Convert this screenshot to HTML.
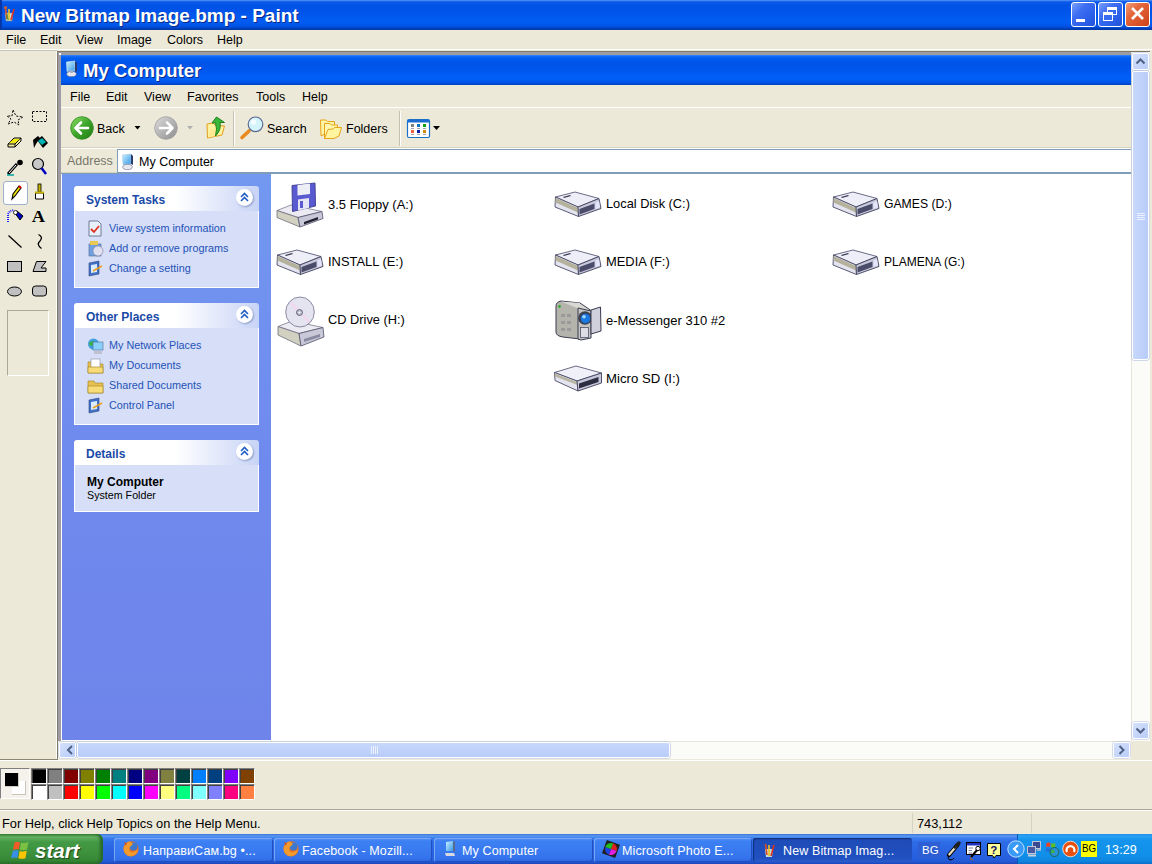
<!DOCTYPE html>
<html><head><meta charset="utf-8">
<style>
*{margin:0;padding:0;box-sizing:border-box}
html,body{width:1152px;height:864px;overflow:hidden;background:#ECE9D8;font-family:"Liberation Sans",sans-serif;position:relative}
.a{position:absolute}
.t{position:absolute;white-space:nowrap;line-height:1}
#ptitle{left:0;top:0;width:1152px;height:30px;background:linear-gradient(#5a9ef8 0px,#2a6ff0 1px,#0a58e8 2px,#0052e6 6px,#0054ea 12px,#005af0 18px,#005cf2 22px,#0054e6 26px,#0046cc 28px,#003aa8 29px,#003aa8 30px)}
.wb{position:absolute;top:2px;width:25px;height:25px;border:1px solid #fff;border-radius:3px}
.pc{position:absolute;width:16px;height:16px;border-top:1px solid #808080;border-left:1px solid #808080;border-right:1px solid #fff;border-bottom:1px solid #fff}
.pc i{display:block;width:14px;height:14px;border-top:1px solid #404040;border-left:1px solid #404040}
.tb{position:absolute;top:838px;height:24px;border-radius:3px;background:linear-gradient(#5d92f0 0,#3c81f3 3px,#3a7af0 12px,#3473ec 20px,#2f66de 24px);box-shadow:inset 1px 1px 0 #7aa6f6,inset -1px -1px 0 #1f4fc0}
.tbt{position:absolute;top:845px;font-size:12.5px;letter-spacing:0.12px;color:#fff;white-space:nowrap;line-height:1}
.ph{position:absolute;left:74px;width:185px;height:25px;border-radius:3px 3px 0 0;background:linear-gradient(90deg,#fff 0,#fff 55%,#c8d4f6 100%)}
.pb{position:absolute;left:74px;width:185px;background:#d6dff7;border:1px solid #fff;border-top:none}
.ph b{position:absolute;left:12px;top:8px;font-size:12px;color:#1a4aa8;line-height:1}
.lk{position:absolute;left:109px;font-size:10.8px;color:#1f52b8;white-space:nowrap;line-height:1}
.chev{position:absolute;left:236px;width:17px;height:17px;border-radius:50%;background:#fff;box-shadow:1px 1px 2px #8c9cc8}
.di{position:absolute;font-size:13px;color:#000;white-space:nowrap;line-height:1}
</style></head>
<body>
<!-- ============ Paint title bar ============ -->
<div id="ptitle" class="a"></div>
<div class="a" style="left:0;top:0;width:2px;height:30px;background:#0738a8"></div>
<div class="t" style="left:21px;top:6px;font-size:19px;font-weight:bold;color:#fff;text-shadow:1px 1px 0 #0a2a8a">New Bitmap Image.bmp - Paint</div>
<div class="wb" style="left:1071px;background:linear-gradient(135deg,#7aa0fa 0,#3d6ef2 35%,#2a5fe8 70%,#2253d8 100%)"></div>
<div class="wb" style="left:1098px;background:linear-gradient(135deg,#7aa0fa 0,#3d6ef2 35%,#2a5fe8 70%,#2253d8 100%)"></div>
<div class="wb" style="left:1125px;background:linear-gradient(135deg,#f2a07a 0,#e4673a 35%,#d9532a 70%,#c84418 100%)"></div>
<div class="a" style="left:1076px;top:19px;width:9px;height:3px;background:#fff"></div>
<div class="a" style="left:1107px;top:7px;width:10px;height:8px;border:1px solid #fff;border-top-width:3px"></div>
<div class="a" style="left:1103px;top:12px;width:10px;height:9px;border:1px solid #fff;border-top-width:3px;background:#3a6cf0"></div>
<svg class="a" style="left:1125px;top:2px" width="25" height="25"><path d="M7 6 L18 17 M18 6 L7 17" stroke="#fff" stroke-width="2.6"/></svg>

<!-- ============ Paint menu ============ -->
<div class="t" style="left:6px;top:34px;font-size:12.5px">File</div>
<div class="t" style="left:40px;top:34px;font-size:12.5px">Edit</div>
<div class="t" style="left:76px;top:34px;font-size:12.5px">View</div>
<div class="t" style="left:117px;top:34px;font-size:12.5px">Image</div>
<div class="t" style="left:167px;top:34px;font-size:12.5px">Colors</div>
<div class="t" style="left:217px;top:34px;font-size:12.5px">Help</div>
<div class="a" style="left:0;top:49px;width:1152px;height:1px;background:#fff"></div>

<!-- ============ toolbox ============ -->
<div class="a" style="left:56px;top:50px;width:1px;height:710px;background:#fff"></div>
<div class="a" style="left:3px;top:181px;width:25px;height:24px;border:1px solid #9db0cc;border-radius:3px;background:#fff"></div>
<div class="a" style="left:7px;top:310px;width:42px;height:66px;border-top:1px solid #aca899;border-left:1px solid #aca899;border-right:1px solid #fff;border-bottom:1px solid #fff"></div>
<svg class="a" style="left:0;top:100px" width="57" height="200" viewBox="0 100 57 200">
 <!-- free select star -->
 <path d="M13 110 L16 116 L23 117 L18 120 L19 125 L14 122 L8 124 L11 119 L7 116 L12 116 Z" fill="none" stroke="#000" stroke-width="1" stroke-dasharray="2 1.5"/>
 <!-- rect select -->
 <rect x="32.5" y="111.5" width="14" height="10" fill="none" stroke="#000" stroke-dasharray="2 1.5"/>
 <!-- eraser -->
 <path d="M8 144 L14 138 L21 138 L21 141 L15 147 L8 147 Z" fill="#f5f0a0" stroke="#000"/>
 <path d="M8 144 L15 144 L21 138 M15 144 L15 147" fill="none" stroke="#000"/>
 <path d="M9 143 L14 139 L20 139 L15 143Z" fill="#f0e800"/>
 <!-- fill bucket -->
 <path d="M33 140 L38 136 L40 138 L36 144 L34 148 Z" fill="#000"/>
 <path d="M37 140 L42 136 L48 143 L43 148 Z" fill="#000"/>
 <path d="M38 141 L42 138 L46 142 L42 145 Z" fill="#00b4b4"/>
 <!-- picker -->
 <path d="M8 174 L17 164" stroke="#000" stroke-width="3"/>
 <path d="M9 173 L16 165" stroke="#fff" stroke-width="1"/>
 <circle cx="20" cy="162.5" r="2.8" fill="#000"/>
 <path d="M7 175 L14 175" stroke="#00a0a0" stroke-width="1.5"/>
 <!-- magnifier -->
 <circle cx="38" cy="164" r="5.5" fill="#c8c8c8" stroke="#000" stroke-width="1.2"/>
 <path d="M41.5 168 L46 174" stroke="#0000c0" stroke-width="2.5"/>
 <!-- pencil -->
 <path d="M12 199 L13 194 L19 186 L21 188 L15 196 Z" fill="#f0e000" stroke="#000" stroke-width="1.1"/>
 <path d="M19 186 L21 188" stroke="#e00000" stroke-width="2"/>
 <!-- brush -->
 <rect x="38" y="184" width="3" height="8" fill="#c8b400" stroke="#000" stroke-width="0.8"/>
 <path d="M35.5 193 L43.5 193 L43.5 199 L35.5 199Z" fill="#fff" stroke="#000"/>
 <path d="M35 192.5 L44 192.5" stroke="#c8b400" stroke-width="2"/>
 <!-- airbrush -->
 <path d="M8 222 L8 214 L10 211 L14 210" stroke="#2020ff" stroke-width="2" stroke-dasharray="1 1" fill="none"/>
 <path d="M14 212 L17 211 L23 216 L20 220 Z" fill="#0000c0" stroke="#000"/>
 <circle cx="15.5" cy="212.5" r="2" fill="#fff" stroke="#000" stroke-width="0.8"/>
 <!-- text A -->
 <text x="31.5" y="222" font-family="Liberation Serif" font-weight="bold" font-size="16" fill="#000" transform="translate(-4.5 0) scale(1.15 1)">A</text>
 <!-- line -->
 <path d="M8.5 235.5 L21.5 247.5" stroke="#000" stroke-width="1.3"/>
 <!-- curve -->
 <path d="M38.5 234.5 Q43.5 237 40 241 Q36 244.5 41.5 248.5" fill="none" stroke="#000" stroke-width="1.3"/>
 <!-- rect -->
 <rect x="7.5" y="261.5" width="14" height="10" fill="#c0c0c0" stroke="#000"/>
 <!-- polygon -->
 <path d="M36.5 261.5 L46 261.5 L41 268 L46 268 L46 271.5 L33 271.5 Z" fill="#c0c0c0" stroke="#000"/>
 <!-- ellipse -->
 <ellipse cx="14.5" cy="291.5" rx="7" ry="4.5" fill="#c0c0c0" stroke="#000"/>
 <!-- round rect -->
 <rect x="32.5" y="286" width="14" height="10" rx="3" fill="#c0c0c0" stroke="#000"/>
</svg>

<!-- ============ canvas frame ============ -->
<div class="a" style="left:0;top:50px;width:57px;height:1px;background:#c8c4b4"></div>
<div class="a" style="left:0;top:759px;width:58px;height:1px;background:#8a8672"></div>
<div class="a" style="left:0;top:760px;width:1152px;height:1px;background:#fff"></div>
<div class="a" style="left:57px;top:51px;width:1093px;height:708px;background:#7e7a68"></div>
<div class="a" style="left:58px;top:52px;width:1092px;height:707px;background:#a09ca4"></div>
<div class="a" style="left:58px;top:758px;width:1092px;height:1px;background:#d8d4c0"></div>
<div class="a" style="left:59px;top:53px;width:2px;height:2px;background:#fff"></div>
<div class="a" style="left:61px;top:55px;width:1070px;height:686px;background:#fff"></div>
<!-- explorer title -->
<div class="a" style="left:61px;top:55px;width:1070px;height:30px;background:linear-gradient(#3d8cf8 0,#1a6ef4 1px,#005ef2 3px,#0054e8 8px,#0056ec 14px,#005cf4 20px,#0060f8 24px,#0052e4 28px,#003fbe 30px,#0036a8 31px)"></div>
<div class="t" style="left:83px;top:62px;font-size:18.5px;font-weight:bold;color:#fff;text-shadow:1px 1px 0 #0a2a8a">My Computer</div>
<!-- explorer menu -->
<div class="a" style="left:61px;top:85px;width:1070px;height:23px;background:#ece9d8"></div>
<div class="a" style="left:61px;top:107px;width:1070px;height:1px;background:#fff"></div>
<div class="t" style="left:70px;top:91px;font-size:12.5px">File</div>
<div class="t" style="left:106px;top:91px;font-size:12.5px">Edit</div>
<div class="t" style="left:144px;top:91px;font-size:12.5px">View</div>
<div class="t" style="left:187px;top:91px;font-size:12.5px">Favorites</div>
<div class="t" style="left:256px;top:91px;font-size:12.5px">Tools</div>
<div class="t" style="left:302px;top:91px;font-size:12.5px">Help</div>
<!-- toolbar -->
<div class="a" style="left:61px;top:108px;width:1070px;height:40px;background:#ece9d8"></div>
<div class="a" style="left:61px;top:147px;width:1070px;height:1px;background:#d6d2bc"></div>
<div class="a" style="left:61px;top:148px;width:1070px;height:1px;background:#fff"></div>
<div class="a" style="left:233px;top:111px;width:1px;height:35px;background:#c5c2b2"></div>
<div class="a" style="left:234px;top:111px;width:1px;height:35px;background:#fff"></div>
<div class="a" style="left:399px;top:111px;width:1px;height:35px;background:#c5c2b2"></div>
<div class="a" style="left:400px;top:111px;width:1px;height:35px;background:#fff"></div>
<div class="t" style="left:97px;top:123px;font-size:12.5px">Back</div>
<div class="t" style="left:267px;top:123px;font-size:12.5px">Search</div>
<div class="t" style="left:346px;top:123px;font-size:12.5px">Folders</div>
<!-- address -->
<div class="a" style="left:61px;top:149px;width:1070px;height:25px;background:#ece9d8"></div>
<div class="a" style="left:61px;top:172px;width:1070px;height:1px;background:#d6d2bc"></div>
<div class="t" style="left:67px;top:155px;font-size:12.5px;color:#7a786c">Address</div>
<div class="a" style="left:117px;top:149px;width:1014px;height:24px;background:#fff;border:1px solid #7f9db9;border-right:none"></div>
<div class="t" style="left:139px;top:156px;font-size:12.5px">My Computer</div>
<!-- left pane -->
<div class="a" style="left:62px;top:174px;width:209px;height:566px;background:linear-gradient(#7298f0,#6f8aee 50%,#6e84ea)"></div>
<div class="a" style="left:61px;top:173px;width:1070px;height:1px;background:#7f9db9"></div>

<div class="ph" style="top:186px"><b>System Tasks</b></div>
<div class="pb" style="top:211px;height:77px"></div>
<div class="chev" style="top:189px"></div>
<div class="lk" style="top:223px">View system information</div>
<div class="lk" style="top:243px">Add or remove programs</div>
<div class="lk" style="top:263px">Change a setting</div>

<div class="ph" style="top:303px"><b>Other Places</b></div>
<div class="pb" style="top:328px;height:97px"></div>
<div class="chev" style="top:306px"></div>
<div class="lk" style="top:340px">My Network Places</div>
<div class="lk" style="top:360px">My Documents</div>
<div class="lk" style="top:380px">Shared Documents</div>
<div class="lk" style="top:400px">Control Panel</div>

<div class="ph" style="top:440px"><b>Details</b></div>
<div class="pb" style="top:465px;height:47px"></div>
<div class="chev" style="top:443px"></div>
<div class="t" style="left:87px;top:476px;font-size:12px;font-weight:bold">My Computer</div>
<div class="t" style="left:87px;top:490px;font-size:10.7px">System Folder</div>

<!-- drive labels -->
<div class="di" style="left:328px;top:198px">3.5 Floppy (A:)</div>
<div class="di" style="left:606px;top:198px;font-size:12.8px">Local Disk (C:)</div>
<div class="di" style="left:884px;top:198px;font-size:12.2px">GAMES (D:)</div>
<div class="di" style="left:328px;top:256px;font-size:12.9px">INSTALL (E:)</div>
<div class="di" style="left:606px;top:256px;font-size:12.9px">MEDIA (F:)</div>
<div class="di" style="left:884px;top:256px;font-size:12.0px">PLAMENA (G:)</div>
<div class="di" style="left:328px;top:314px;font-size:12.8px">CD Drive (H:)</div>
<div class="di" style="left:606px;top:314px">e-Messenger 310 #2</div>
<div class="di" style="left:606px;top:372px;font-size:13.2px">Micro SD (I:)</div>

<!-- paint scrollbars -->
<div class="a" style="left:1131px;top:52px;width:19px;height:689px;background:#fbfbf8;border-left:1px solid #e8e6da"></div>
<div class="a" style="left:1132px;top:53px;width:17px;height:17px;border:1px solid #fff;border-radius:2px;background:linear-gradient(135deg,#d4e0fc,#b9cdf8);box-shadow:0 0 0 0.5px #b0c0e0"></div>
<div class="a" style="left:1132px;top:71px;width:17px;height:289px;border:1px solid #fff;border-radius:2px;background:linear-gradient(90deg,#c8d8fb,#b8ccfa);box-shadow:0 0 0 0.5px #a8b8d8"></div>
<div class="a" style="left:1132px;top:722px;width:17px;height:17px;border:1px solid #fff;border-radius:2px;background:linear-gradient(135deg,#d4e0fc,#b9cdf8);box-shadow:0 0 0 0.5px #b0c0e0"></div>
<div class="a" style="left:58px;top:741px;width:1073px;height:18px;background:#fbfbf8;border-top:1px solid #e8e6da"></div>
<div class="a" style="left:59px;top:742px;width:17px;height:16px;border:1px solid #fff;border-radius:2px;background:linear-gradient(135deg,#d4e0fc,#b9cdf8);box-shadow:0 0 0 0.5px #b0c0e0"></div>
<div class="a" style="left:77px;top:742px;width:593px;height:16px;border:1px solid #fff;border-radius:2px;background:linear-gradient(#c8d8fb,#b8ccfa);box-shadow:0 0 0 0.5px #a8b8d8"></div>
<div class="a" style="left:1113px;top:742px;width:17px;height:16px;border:1px solid #fff;border-radius:2px;background:linear-gradient(135deg,#d4e0fc,#b9cdf8);box-shadow:0 0 0 0.5px #b0c0e0"></div>
<div class="a" style="left:1131px;top:741px;width:19px;height:19px;background:#ece9d8"></div>
<div class="a" style="left:1150px;top:50px;width:2px;height:710px;background:#ece9d8"></div>



<!-- ============ icon overlay ============ -->
<svg class="a" style="left:0;top:0" width="1152" height="864">
<defs>
 <linearGradient id="gGreen" x1="0" y1="0" x2="1" y2="1"><stop offset="0" stop-color="#8ee06a"/><stop offset="0.5" stop-color="#3ea52a"/><stop offset="1" stop-color="#1f7a14"/></linearGradient>
 <linearGradient id="gGray" x1="0" y1="0" x2="1" y2="1"><stop offset="0" stop-color="#dcdcdc"/><stop offset="0.5" stop-color="#b4b4b4"/><stop offset="1" stop-color="#8c8c8c"/></linearGradient>
 <linearGradient id="gFold" x1="0" y1="0" x2="0" y2="1"><stop offset="0" stop-color="#fff4b8"/><stop offset="1" stop-color="#e8c050"/></linearGradient>
 <linearGradient id="gMon" x1="0" y1="0" x2="1" y2="1"><stop offset="0" stop-color="#c8f0ff"/><stop offset="1" stop-color="#3a9ae8"/></linearGradient>
 <g id="hdd">
  <path d="M1.5 5 L21 0 L45 6.5 L24 15 Z" fill="#eeeef8" stroke="#5a5a78" stroke-width="0.9"/>
  <path d="M9 5 L16 3 L17 4 L10 6 Z" fill="#3a3a50"/>
  <path d="M1.5 5 L24 15 L24.5 24.5 L1 15 Z" fill="#e4e4f0" stroke="#4a4a68" stroke-width="0.9"/>
  <path d="M1.7 6 L24 16 L24 20.5 L1.5 10.5 Z" fill="#b4b29c"/>
  <path d="M24 15 L45 6.5 L47 16.5 L24.5 24.5 Z" fill="#c8c8dc" stroke="#40405a" stroke-width="0.9"/>
  <path d="M25.5 17 L40.5 11.5 L40.5 17 L25.5 22.5 Z" fill="#4a4c6a"/>
  <path d="M41.5 10.5 L45 9 L46 15.5 L41.5 17 Z" fill="#e4e4fa"/>
 </g>
 <g id="chev">
  <path d="M-3.5 -0.5 L0 -4 L3.5 -0.5 M-3.5 3.5 L0 0 L3.5 3.5" fill="none" stroke="#215dc6" stroke-width="1.6"/>
 </g>
</defs>

<!-- paint title icon -->
<g transform="translate(4,6)">
 <path d="M1 7 L9 7 L8 15 L2 15 Z" fill="#c8dcd8" stroke="#708080" stroke-width="0.6"/>
 <path d="M3 13 L1.5 2" stroke="#e05020" stroke-width="1.6"/>
 <circle cx="1.5" cy="1.5" r="1.6" fill="#d06030"/>
 <path d="M5 14 L5 3" stroke="#f0c020" stroke-width="1.6"/>
 <path d="M7 14 L10 3" stroke="#e03020" stroke-width="1.6"/>
 <path d="M4 14 L3 8" stroke="#40a040" stroke-width="1.2"/>
</g>
<!-- explorer title icon -->
<path d="M66.5 62 L75 61 L75 71 L67 71.5 Z" fill="url(#gMon)" stroke="#d8e8f0" stroke-width="0.6"/>
<path d="M75 61 L77 63 L77 72 L75 71 Z" fill="#2a3a6a"/>
<ellipse cx="71.5" cy="74" rx="4.8" ry="2.6" fill="#e8e8f0" stroke="#6a6a8a" stroke-width="0.6"/>
<rect x="70" y="71" width="3" height="2" fill="#b0b0c0"/>
<!-- back / forward -->
<circle cx="82" cy="128" r="11.3" fill="url(#gGreen)" stroke="#2a8a1c" stroke-width="0.8"/>
<path d="M88 128 L76 128 M81 122.5 L75.5 128 L81 133.5" fill="none" stroke="#fff" stroke-width="2.6" stroke-linecap="round" stroke-linejoin="round"/>
<path d="M134.5 126 L140.5 126 L137.5 129.5 Z" fill="#000"/>
<circle cx="166" cy="128" r="11.3" fill="url(#gGray)" stroke="#a0a0a0" stroke-width="0.8"/>
<path d="M160 128 L172 128 M167 122.5 L172.5 128 L167 133.5" fill="none" stroke="#fff" stroke-width="2.6" stroke-linecap="round" stroke-linejoin="round"/>
<path d="M187 126 L193 126 L190 129.5 Z" fill="#b0b0b0"/>
<!-- up -->
<path d="M207 124 L213 123 L215.5 125.5 L224.5 126 L222 135 L207.5 138 Z" fill="#fff2a0" stroke="#e0a020" stroke-width="1"/>
<path d="M208 137.5 L210.5 130 L219 128 L216 136 Z" fill="#ffe890" opacity="0.9"/>
<path d="M212 123 L216.5 117 L224.5 122.5 L220 122.5 Q221.5 130 215.5 136 Q217.5 129 215.5 122.8 Z" fill="#3ab83a" stroke="#0e780e" stroke-width="0.9" stroke-linejoin="round"/>
<!-- search -->
<path d="M249 131 L242 137.5" stroke="#e88a20" stroke-width="3.6" stroke-linecap="round"/>
<circle cx="255.5" cy="124.3" r="7.3" fill="#d4f4fc" stroke="#5a6a90" stroke-width="1.2"/>
<circle cx="253.5" cy="122" r="2.8" fill="#fff" opacity="0.7"/>
<!-- folders -->
<path d="M320.5 120 L326 120 L327.5 121.5 L334.5 121.5 L334.5 128 L321 136 Z" fill="#fff4a8" stroke="#e8a418" stroke-width="1"/>
<path d="M324.5 123.5 L330 123.5 L331.5 125 L337.5 125 L337.5 128 L324.5 138.5 Z" fill="#fff6b0" stroke="#e8a418" stroke-width="1"/>
<path d="M324.5 138.5 L328 129.5 L333 129 L334.5 127.5 L341.5 127.5 L339 136 L334 138.5 Z" fill="#fff4a0" stroke="#e8a418" stroke-width="1"/>
<!-- views -->
<rect x="407.5" y="119.5" width="22" height="18" rx="1.5" fill="#fff" stroke="#1a70c8" stroke-width="1.2"/>
<rect x="408" y="120" width="21" height="2.5" fill="#1a6ad0"/>
<rect x="411" y="124" width="3" height="3" fill="#808080"/><rect x="417" y="124" width="3" height="3" fill="#0a70c0"/><rect x="423" y="124" width="3" height="3" fill="#10a010"/>
<rect x="411" y="130" width="3" height="3" fill="#f06040"/><rect x="417" y="130" width="3" height="3" fill="#1020a0"/><rect x="423" y="130" width="3" height="3" fill="#d08a10"/>
<path d="M411 128.5 H414 M417 128.5 H420 M423 128.5 H426 M411 134.5 H414 M417 134.5 H420 M423 134.5 H426" stroke="#a0a0b0" stroke-width="1"/>
<path d="M433 126 L440 126 L436.5 130 Z" fill="#000"/>
<!-- address icon -->
<path d="M122.5 155 L131 154 L131 164 L123 164.5 Z" fill="url(#gMon)" stroke="#a8c8e0" stroke-width="0.6"/>
<path d="M131 154 L133 156 L133 165 L131 164 Z" fill="#2a3a6a"/>
<ellipse cx="127.5" cy="167" rx="4.8" ry="2.6" fill="#e8e8f0" stroke="#6a6a8a" stroke-width="0.6"/>
<!-- chevrons -->
<use href="#chev" x="244.5" y="197.5"/>
<use href="#chev" x="244.5" y="314.5"/>
<use href="#chev" x="244.5" y="451.5"/>

<!-- task link icons -->
<g transform="translate(88,221)">
 <path d="M1 0 L10 0 L13 3 L13 15 L1 15 Z" fill="#e8f0fc" stroke="#50607a" stroke-width="0.8"/>
 <path d="M3 8 L6 11 L11 5" fill="none" stroke="#e03020" stroke-width="1.8"/>
</g>
<g transform="translate(88,241)">
 <rect x="1" y="3" width="12" height="12" fill="#70a0e0" stroke="#506890" stroke-width="0.6"/>
 <circle cx="10" cy="10" r="5" fill="#e0e0f0" stroke="#8080a0" stroke-width="0.6"/>
 <rect x="2" y="0" width="8" height="4" fill="#e8c850"/>
</g>
<g transform="translate(88,261)">
 <path d="M1 2 L11 0 L11 13 L1 15 Z" fill="#4070c8" stroke="#304880" stroke-width="0.6"/>
 <path d="M3 4 L9 3 L9 11 L3 12 Z" fill="#d8ecfc"/>
 <path d="M5 10 L14 5" stroke="#f0a020" stroke-width="1.5"/>
</g>
<g transform="translate(88,338)">
 <circle cx="5.5" cy="6" r="5.5" fill="#40a0e0"/>
 <path d="M1 5 Q4 2 7 4 Q5 8 2 8Z" fill="#40b040"/>
 <rect x="5" y="4" width="10" height="8" fill="#8ad0f8" stroke="#4a6a9a" stroke-width="0.6"/>
 <rect x="6" y="13" width="8" height="3" fill="#c0c0d0"/>
</g>
<g transform="translate(88,358)">
 <path d="M0 4 L6 4 L7 6 L15 6 L15 15 L0 15 Z" fill="#e8c050" stroke="#a08020" stroke-width="0.6"/>
 <rect x="3" y="1" width="9" height="9" fill="#fff" stroke="#8090a0" stroke-width="0.6"/>
 <path d="M0 9 L15 9 L15 15 L0 15 Z" fill="#f8dc78" stroke="#a08020" stroke-width="0.6"/>
</g>
<g transform="translate(88,379)">
 <path d="M0 2 L6 2 L7 4 L15 4 L15 14 L0 14 Z" fill="#e8c050" stroke="#a08020" stroke-width="0.6"/>
 <path d="M0 7 L15 7 L15 14 L0 14 Z" fill="#f8dc78" stroke="#a08020" stroke-width="0.6"/>
</g>
<g transform="translate(88,398)">
 <path d="M1 2 L11 0 L11 13 L1 15 Z" fill="#4070c8" stroke="#304880" stroke-width="0.6"/>
 <path d="M3 4 L9 3 L9 11 L3 12 Z" fill="#d8ecfc"/>
 <path d="M5 10 L14 5" stroke="#f0a020" stroke-width="1.5"/>
</g>

<!-- drive icons -->
<use href="#hdd" x="554" y="192"/>
<use href="#hdd" x="832" y="192"/>
<use href="#hdd" x="276" y="250"/>
<use href="#hdd" x="554" y="250"/>
<use href="#hdd" x="832" y="250"/>
<!-- floppy -->
<g transform="translate(276,204)">
 <path d="M1 6.5 L15 1 L46 7.5 L22 13.5 Z" fill="#ecebf4" stroke="#7c7c90" stroke-width="0.8"/>
 <path d="M1 6.5 L22 13.5 L24 23 L1 13.5 Z" fill="#d2d0c0" stroke="#6c6c7c" stroke-width="0.8"/>
 <path d="M22 13.5 L46 7.5 L47 14.5 L24 23 Z" fill="#c8c8d8" stroke="#50506a" stroke-width="0.8"/>
 <path d="M28 18 L42 13 L42 15.5 L28 20.5 Z" fill="#202030"/>
</g>
<g>
 <path d="M292 185.5 L315 183 L315.5 206 L292.5 211.5 Z" fill="#5a5ad0" stroke="#3a3a90" stroke-width="0.9"/>
 <path d="M297.5 185 L310 183.6 L310 194 L297.5 195.5 Z" fill="#eeeef6"/>
 <path d="M298 199.5 L309 198 L309 208 L298 210.5 Z" fill="#e4e4f4"/>
 <rect x="300" y="201" width="3" height="7" fill="#5a5ad0"/>
</g>
<!-- cd drive -->
<g transform="translate(277,320)">
 <path d="M1 6.5 L15 1 L46 7.5 L22 13.5 Z" fill="#ecebf4" stroke="#7c7c90" stroke-width="0.8"/>
 <path d="M1 6.5 L22 13.5 L24 26 L1 15 Z" fill="#d2d0c0" stroke="#6c6c7c" stroke-width="0.8"/>
 <path d="M22 13.5 L46 7.5 L47 17 L24 26 Z" fill="#c8c8d8" stroke="#50506a" stroke-width="0.8"/>
 <path d="M27 19 L43 14 L43 17 L27 22 Z" fill="#8a8aa0"/>
</g>
<ellipse cx="300" cy="312" rx="14.3" ry="15" fill="#e4e4f0" stroke="#70708a" stroke-width="0.8"/>
<path d="M291 303 L297 310 M303 315 L309 322" stroke="#f0d8f0" stroke-width="3"/>
<circle cx="299.5" cy="312.5" r="3" fill="#b8b8c8" stroke="#50506a" stroke-width="0.8"/>
<circle cx="299.5" cy="312.5" r="1.1" fill="#fff"/>
<!-- camera -->
<path d="M556 306 Q556 302 561 301 L580 303 L580 339 L563 337 Q556 336 556 332 Z" fill="#b4b4ac" stroke="#3a3a50" stroke-width="1"/>
<path d="M561 301.5 L580 303 L591 310.5 L578 308.5 Z" fill="#d8d8d4"/>
<path d="M578 308 L591 311 L591 338 L581 340 L578 339 Z" fill="#c4c4c0" stroke="#3a3a50" stroke-width="1"/>
<path d="M580 303 L591 310.5" stroke="#3a3a50" stroke-width="1"/>
<rect x="561" y="314" width="4" height="3" fill="#9a9a9a"/><rect x="567" y="314" width="4" height="3" fill="#9a9a9a"/>
<rect x="561" y="321" width="4" height="3" fill="#9a9a9a"/><rect x="567" y="321" width="4" height="3" fill="#9a9a9a"/>
<rect x="561" y="328" width="4" height="3" fill="#9a9a9a"/><rect x="567" y="328" width="4" height="3" fill="#9a9a9a"/>
<circle cx="559.5" cy="306.5" r="1.4" fill="#30b030"/>
<circle cx="585" cy="318" r="6.8" fill="#3a4050"/>
<circle cx="585.5" cy="318.5" r="4.8" fill="#1a78e0"/>
<circle cx="584" cy="316.8" r="1.8" fill="#a0d8ff"/>
<rect x="580.5" y="327.5" width="8" height="10" fill="#dcdce4" stroke="#50506a" stroke-width="0.8"/>
<path d="M591 310 L600.5 307 L601 331 L591 334 Z" fill="#d0d0dc" stroke="#3a3a50" stroke-width="1"/>
<!-- micro sd -->
<g transform="translate(554,366)">
 <path d="M0.5 6.5 L22 0 L47.5 7 L23 15 Z" fill="#f0f0f8" stroke="#5a5a78" stroke-width="0.9"/>
 <path d="M0.5 6.5 L23 15 L24 25 L1 14.5 Z" fill="#e4e4f0" stroke="#4a4a68" stroke-width="0.9"/>
 <path d="M0.8 7.5 L23 16 L23.5 19 L1 10.5 Z" fill="#b8b6a0"/>
 <path d="M23 15 L47.5 7 L47.5 17 L24 25 Z" fill="#c8c8dc" stroke="#40405a" stroke-width="0.9"/>
 <path d="M25 17.5 L44.5 11 L44.5 16 L25 22.5 Z" fill="#2e2e40"/>
</g>

<!-- scrollbar arrows -->
<path d="M1136.5 63.5 L1140.5 59.5 L1144.5 63.5" fill="none" stroke="#4d6185" stroke-width="2"/>
<path d="M1136.5 728.5 L1140.5 732.5 L1144.5 728.5" fill="none" stroke="#4d6185" stroke-width="2"/>
<path d="M72 746 L68 750 L72 754" fill="none" stroke="#4d6185" stroke-width="2"/>
<path d="M1119.5 746 L1123.5 750 L1119.5 754" fill="none" stroke="#4d6185" stroke-width="2"/>
<path d="M371.5 746 L371.5 754 M373.5 746 L373.5 754 M375.5 746 L375.5 754 M377.5 746 L377.5 754" stroke="#eef2fe" stroke-width="1"/>
<path d="M1137 213.5 L1145 213.5 M1137 215.5 L1145 215.5 M1137 217.5 L1145 217.5 M1137 219.5 L1145 219.5" stroke="#eef2fe" stroke-width="1"/>
</svg>

<!-- ============ palette ============ -->
<div class="a" style="left:0;top:768px;width:30px;height:31px;border-top:1px solid #808080;border-left:1px solid #808080;border-right:1px solid #fff;border-bottom:1px solid #fff;background:#f4f2ea"></div>
<div class="a" style="left:12px;top:781px;width:14px;height:14px;background:#fff;border-right:1px solid #c8c4b8;border-bottom:1px solid #c8c4b8"></div>
<div class="a" style="left:5px;top:773px;width:14px;height:14px;background:#000;border:1px solid #d0ccc0;border-left:none;border-top:none"></div>
<div class="pc" style="left:31px;top:768px"><i style="background:#000000"></i></div>
<div class="pc" style="left:31px;top:784px"><i style="background:#ffffff"></i></div>
<div class="pc" style="left:47px;top:768px"><i style="background:#808080"></i></div>
<div class="pc" style="left:47px;top:784px"><i style="background:#c0c0c0"></i></div>
<div class="pc" style="left:63px;top:768px"><i style="background:#800000"></i></div>
<div class="pc" style="left:63px;top:784px"><i style="background:#ff0000"></i></div>
<div class="pc" style="left:79px;top:768px"><i style="background:#808000"></i></div>
<div class="pc" style="left:79px;top:784px"><i style="background:#ffff00"></i></div>
<div class="pc" style="left:95px;top:768px"><i style="background:#008000"></i></div>
<div class="pc" style="left:95px;top:784px"><i style="background:#00ff00"></i></div>
<div class="pc" style="left:111px;top:768px"><i style="background:#008080"></i></div>
<div class="pc" style="left:111px;top:784px"><i style="background:#00ffff"></i></div>
<div class="pc" style="left:127px;top:768px"><i style="background:#000080"></i></div>
<div class="pc" style="left:127px;top:784px"><i style="background:#0000ff"></i></div>
<div class="pc" style="left:143px;top:768px"><i style="background:#800080"></i></div>
<div class="pc" style="left:143px;top:784px"><i style="background:#ff00ff"></i></div>
<div class="pc" style="left:159px;top:768px"><i style="background:#808040"></i></div>
<div class="pc" style="left:159px;top:784px"><i style="background:#ffff80"></i></div>
<div class="pc" style="left:175px;top:768px"><i style="background:#004040"></i></div>
<div class="pc" style="left:175px;top:784px"><i style="background:#00ff80"></i></div>
<div class="pc" style="left:191px;top:768px"><i style="background:#0080ff"></i></div>
<div class="pc" style="left:191px;top:784px"><i style="background:#80ffff"></i></div>
<div class="pc" style="left:207px;top:768px"><i style="background:#004080"></i></div>
<div class="pc" style="left:207px;top:784px"><i style="background:#8080ff"></i></div>
<div class="pc" style="left:223px;top:768px"><i style="background:#8000ff"></i></div>
<div class="pc" style="left:223px;top:784px"><i style="background:#ff0080"></i></div>
<div class="pc" style="left:239px;top:768px"><i style="background:#804000"></i></div>
<div class="pc" style="left:239px;top:784px"><i style="background:#ff8040"></i></div>

<!-- ============ status ============ -->
<div class="a" style="left:0;top:809px;width:1152px;height:1px;background:#aca899"></div>
<div class="a" style="left:0;top:810px;width:1152px;height:1px;background:#fff"></div>
<div class="t" style="left:2px;top:818px;font-size:12.8px">For Help, click Help Topics on the Help Menu.</div>
<div class="a" style="left:912px;top:813px;width:1px;height:20px;background:#d6d2c2"></div>
<div class="a" style="left:1031px;top:813px;width:1px;height:20px;background:#d6d2c2"></div>
<div class="t" style="left:917px;top:818px;font-size:12.8px">743,112</div>

<!-- ============ taskbar ============ -->
<div class="a" style="left:0;top:834px;width:1152px;height:30px;background:linear-gradient(#3a6fd8 0,#5a9af0 2px,#3c7ff0 4px,#2e6ce6 8px,#2a64e2 16px,#2660de 24px,#2257d2 28px,#1c46b8 30px)"></div>
<div class="a" style="left:0;top:834px;width:103px;height:30px;border-radius:0 6px 6px 0;background:linear-gradient(#3c8a3c 0,#64b064 3px,#449a44 8px,#3e923e 18px,#368836 26px,#2a702a 30px);box-shadow:inset -3px 0 3px #2a6a2a"></div>
<div class="t" style="left:35px;top:841px;font-size:20.5px;font-weight:bold;font-style:italic;color:#fff;text-shadow:1px 1px 1px #1a4a1a">start</div>
<svg class="a" style="left:10px;top:841px" width="21" height="19">
 <path d="M4.5 1.5 Q7 0 10 1.2 L8.8 8.5 Q6 7.5 3 9 Z" fill="#f05a28"/>
 <path d="M11 1.5 Q14 2.8 18.5 1 L17 8.6 Q13.5 9.8 9.8 8.8 Z" fill="#7ac143"/>
 <path d="M2.8 10 Q5.8 8.6 8.6 9.6 L7.5 17 Q4.5 16 1 17.5 Z" fill="#3a8ee6"/>
 <path d="M9.6 9.9 Q13 11 16.8 9.8 L15.4 17.2 Q12 18.4 8.4 17.3 Z" fill="#fcc500"/>
</svg>

<!-- taskbar buttons -->
<div class="tb" style="left:114px;width:159px"></div>
<div class="tb" style="left:274px;width:158px"></div>
<div class="tb" style="left:434px;width:159px"></div>
<div class="tb" style="left:594px;width:158px"></div>
<div class="a" style="left:753px;top:838px;width:159px;height:24px;border-radius:3px;background:linear-gradient(#1a44a8 0,#1e4cb8 3px,#2050c0 20px,#2a5ccc 24px);box-shadow:inset 1px 1px 1px #10307a"></div>
<div class="tbt" style="left:143px">НаправиСам.bg •...</div>
<div class="tbt" style="left:302px">Facebook - Mozill...</div>
<div class="tbt" style="left:462px">My Computer</div>
<div class="tbt" style="left:622px">Microsoft Photo E...</div>
<div class="tbt" style="left:783px">New Bitmap Imag...</div>
<div class="a" style="left:918px;top:842px;width:22px;height:16px;background:#2d5ed4"></div>
<div class="tbt" style="left:922px;font-size:11.5px;letter-spacing:0">BG</div>
<!-- tray -->
<div class="a" style="left:1017px;top:834px;width:135px;height:30px;background:linear-gradient(#1f8ee8 0,#2aa0f2 2px,#1494ec 6px,#1190ea 20px,#0f86e0 27px,#0b6cc8 30px);box-shadow:inset 1px 0 0 #0a5ab0"></div>
<div class="tbt" style="left:1105px;top:844px;font-size:12.5px">13:29</div>
<div class="a" style="left:1081px;top:841px;width:16px;height:16px;background:#ffff00"></div>
<div class="t" style="left:1082px;top:843px;font-size:11.5px;color:#000;transform:scaleX(0.85);transform-origin:left">BG</div>
<svg class="a" style="left:0;top:834px" width="1152" height="30" viewBox="0 834 1152 30">
 <!-- firefox icons -->
 <g id="ff">
 <circle cx="131" cy="848.8" r="7.6" fill="#e8701a"/>
 <circle cx="133.5" cy="846.5" r="4" fill="#3a78d0"/>
 <path d="M129.5 841.5 L133 844 L130 847 Q128 850 131 852 Q135 853 138.2 849 Q137.5 855 131 856.3 Q124 856 123.6 848.5 Q124 843 129.5 841.5Z" fill="#f29a30"/>
 <path d="M124.5 842 L127 843.5 L125 846Z" fill="#d85010"/>
 </g>
 <use href="#ff" x="160"/>
 <!-- my computer -->
 <g transform="translate(444,841)">
  <path d="M2 1 L9 0 L9 10 L2 10 Z" fill="url(#gMon)"/>
  <path d="M9 0 L11 1 L11 11 L9 10 Z" fill="#5a6a8a"/>
  <path d="M1 12 L10 12 L11 15 L2 15 Z" fill="#d8d8e0"/>
 </g>
 <!-- photo editor -->
 <g transform="translate(611,849) rotate(20)">
  <rect x="-7" y="-7" width="14" height="14" fill="#202020"/>
  <path d="M0 0 L0 -6 A6 6 0 0 1 6 0Z" fill="#e02020"/>
  <path d="M0 0 L6 0 A6 6 0 0 1 0 6Z" fill="#e020e0"/>
  <path d="M0 0 L0 6 A6 6 0 0 1 -6 0Z" fill="#2040e0"/>
  <path d="M0 0 L-6 0 A6 6 0 0 1 0 -6Z" fill="#20c020"/>
 </g>
 <!-- paint -->
 <g transform="translate(764,842)">
  <path d="M1 7 L9 7 L8 15 L2 15 Z" fill="#c8dcd8"/>
  <path d="M3 13 L1.5 2" stroke="#e05020" stroke-width="1.6"/>
  <path d="M5 14 L5 3" stroke="#f0c020" stroke-width="1.6"/>
  <path d="M7 14 L10 3" stroke="#e03020" stroke-width="1.6"/>
 </g>
 <!-- mic -->
 <path d="M949 855 L957.5 845" stroke="#000" stroke-width="4.2" stroke-linecap="round"/>
 <path d="M949.3 854.5 L957 845.5" stroke="#e8e0c0" stroke-width="2.2" stroke-linecap="round"/>
 <path d="M955 847 L959 843" stroke="#202020" stroke-width="3.4" stroke-linecap="round"/>
 <path d="M948.5 856 Q947 859 950 860 Q953 860 954 858" fill="none" stroke="#000" stroke-width="1"/>
 <!-- ime -->
 <rect x="966.5" y="842.5" width="14" height="12" fill="#fff" stroke="#000"/>
 <rect x="967" y="843" width="13" height="2.5" fill="#2030c0"/>
 <path d="M968.5 848 H973 M968.5 850.5 H972 M968.5 853 H972" stroke="#8080a0" stroke-width="1"/>
 <path d="M971 857 L978 849" stroke="#000" stroke-width="2"/>
 <circle cx="978" cy="848.5" r="2.2" fill="#fff" stroke="#000" stroke-width="1"/>
 <path d="M970.5 857 Q970 860 973 860" fill="none" stroke="#c06020" stroke-width="1"/>
 <!-- help -->
 <path d="M987.5 843.5 L1000.5 843.5 L1000.5 855.5 L996 855.5 L994 858 L992.5 855.5 L987.5 855.5 Z" fill="#ffff98" stroke="#000"/>
 <text x="990.3" y="854" font-size="11.5" font-weight="bold" font-family="Liberation Sans" fill="#101060">?</text>
 <!-- chevron -->
 <circle cx="1016" cy="849" r="8.2" fill="#3a9af8" stroke="#bfe0ff" stroke-width="1"/>
 <path d="M1018 845 L1014 849 L1018 853" fill="none" stroke="#fff" stroke-width="2"/>
 <!-- network -->
 <rect x="1032.5" y="841.5" width="8" height="7" fill="#3a4a90" stroke="#c0c8d8" stroke-width="1"/>
 <rect x="1027.5" y="846.5" width="8" height="7" fill="#4a5aa0" stroke="#c0c8d8" stroke-width="1"/>
 <path d="M1028 855.5 H1036" stroke="#d0d0d8" stroke-width="2"/>
 <path d="M1037 850 H1041" stroke="#c0c0c8" stroke-width="1.5"/>
 <!-- security -->
 <path d="M1046.5 843 Q1048.5 842 1050.5 843 L1050 847 Q1048 846 1046 847Z" fill="#f04020"/>
 <path d="M1051.5 843 Q1053.5 844 1055.5 843 L1055 847 Q1053 848 1051 847Z" fill="#60c020"/>
 <path d="M1046 848 Q1048 847 1050 848 L1049.5 852 Q1047.5 851 1045.5 852Z" fill="#2070e0"/>
 <circle cx="1054.5" cy="852" r="4.5" fill="#2a90d8" stroke="#1a5a2a" stroke-width="0.8"/>
 <path d="M1051.5 850 Q1054 849 1055 852 Q1053 854 1051 853Z" fill="#40b040"/>
 <!-- orange -->
 <circle cx="1070.5" cy="849" r="7.8" fill="#e85010" stroke="#fff0e0" stroke-width="0.8"/>
 <path d="M1074 852 A4 4 0 1 0 1067 852" fill="none" stroke="#fff" stroke-width="2.2"/>
</svg>
</body></html>
